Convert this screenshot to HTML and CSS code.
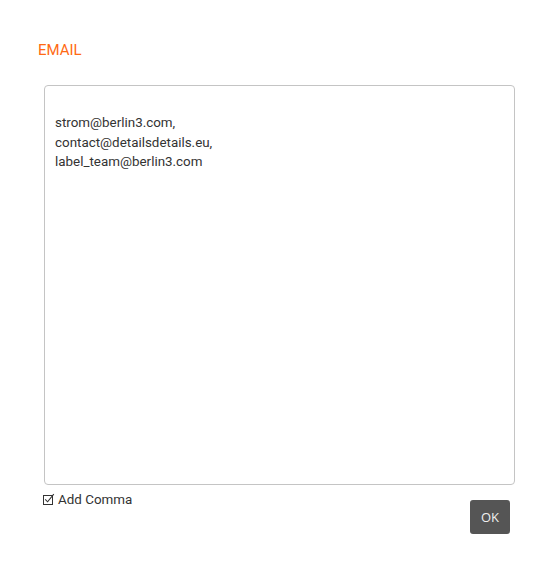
FILE: index.html
```html
<!DOCTYPE html>
<html>
<head>
<meta charset="utf-8">
<link rel="stylesheet" href="styles.css">
</head>
<body>
<div class="panel">
  <div class="label">EMAIL</div>
  <textarea class="emails">strom@berlin3.com,
contact@detailsdetails.eu,
label_team@berlin3.com</textarea>
  <div class="footer">
    <label class="check">
      <svg class="box" width="12" height="12" viewBox="0 0 12 12">
        <rect x="0.5" y="2.5" width="9" height="9" fill="none" stroke="#333" stroke-width="1"/>
        <path d="M2.2 6.4 L4.6 8.8 L10.8 1.2" fill="none" stroke="#333" stroke-width="1.1"/>
      </svg>
      <span>Add Comma</span>
    </label>
    <button class="ok">OK</button>
  </div>
</div>
</body>
</html>
```
FILE: styles.css
```css
html, body {
  margin: 0;
  background: #fff;
}
.panel {
  padding: 42px 0 0 38px;
  font-family: Roboto, "Liberation Sans", sans-serif;
}
.label {
  font-size: 15px;
  line-height: 17px;
  color: #ff6a13;
  margin-bottom: 26px;
}
.emails {
  display: block;
  box-sizing: border-box;
  margin: 0 0 0 6px;
  width: 471px;
  height: 400px;
  border: 1px solid #c4c4c4;
  border-radius: 4px;
  padding: 27px 10px 8px 10px;
  font-family: Roboto, "Liberation Sans", sans-serif;
  font-size: 13.4px;
  line-height: 19.5px;
  color: #333;
  resize: none;
  outline: none;
  overflow: hidden;
}
.footer {
  display: flex;
  justify-content: space-between;
  align-items: flex-start;
  width: 467px;
  margin-left: 5px;
}
.check {
  display: flex;
  align-items: center;
  gap: 3px;
  margin-top: 7px;
  font-size: 13.4px;
  line-height: 16px;
  color: #333;
}
.box {
  display: block;
  margin-top: -2px;
}
.ok {
  margin-top: 15px;
  width: 40px;
  height: 34px;
  border: none;
  border-radius: 3px;
  background: #555;
  color: #f0f0f0;
  font-family: "Open Sans", "Liberation Sans", sans-serif;
  font-size: 13px;
  padding: 0;
}
```
